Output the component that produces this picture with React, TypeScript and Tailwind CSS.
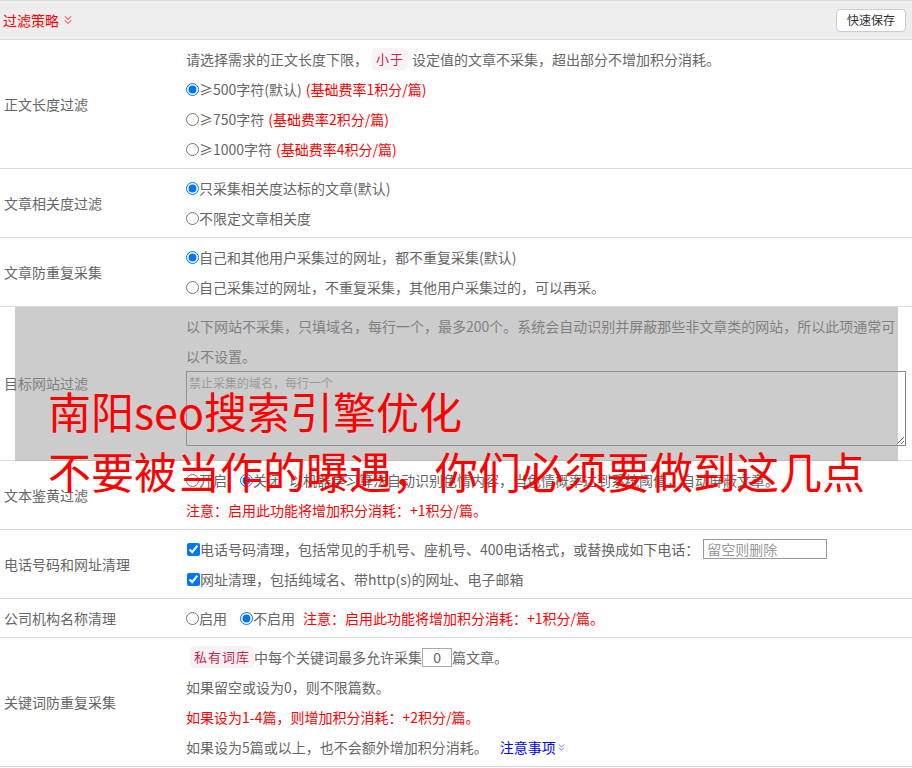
import { ChevronsDown } from 'lucide-react';
import type { ReactNode } from 'react';

type RowProps = {
  label: string;
  children: ReactNode;
};

function Row({ label, children }: RowProps) {
  return (
    <div className="flex border-b border-[#ddd]">
      <div className="w-[186px] shrink-0 flex items-center pl-1">{label}</div>
      <div className="flex-1 py-1 pr-2">{children}</div>
    </div>
  );
}

function Line({ children }: { children: ReactNode }) {
  return <div className="h-[30px] flex items-center whitespace-nowrap">{children}</div>;
}

function Radio({ checked, children, className = '' }: { checked?: boolean; children: ReactNode; className?: string }) {
  return (
    <label className={`inline-flex items-center ${className}`}>
      <input type="radio" defaultChecked={checked} className="m-0 w-[13px] h-[13px]" />
      <span>{children}</span>
    </label>
  );
}

function Check({ children }: { children: ReactNode }) {
  return (
    <label className="inline-flex items-center">
      <input type="checkbox" defaultChecked className="m-0 ml-px w-[13px] h-[13px]" />
      <span>{children}</span>
    </label>
  );
}

function Tag({ children }: { children: ReactNode }) {
  return (
    <span className="bg-[#f9f2f4] text-[#c7254e] text-[13px] rounded px-1 py-px mx-1 tracking-[1px]">
      {children}
    </span>
  );
}

const red = 'text-[#f00]';

export default function App() {
  return (
    <div className="relative w-[912px] h-[768px] overflow-hidden bg-white text-[14px] text-[#666] font-['Noto_Sans_CJK_SC',sans-serif]">
      {/* header */}
      <div className="h-[40px] border-y border-[#ddd] bg-[#eee] flex items-center justify-between pl-[3px] pr-[6px]">
        <div className={`flex items-center gap-0.5 ${red}`}>
          <span>过滤策略</span>
          <ChevronsDown size={14} strokeWidth={1.8} className="text-[#f55]" />
        </div>
        <button className="h-[23px] w-[70px] bg-white border border-[#ccc] rounded-[4px] text-[12px] text-[#333]">
          快速保存
        </button>
      </div>

      <Row label="正文长度过滤">
        <Line>
          请选择需求的正文长度下限，<Tag>小于</Tag>设定值的文章不采集，超出部分不增加积分消耗。
        </Line>
        <Line>
          <Radio checked>≥500字符(默认)</Radio>
          <span className={`ml-1 ${red}`}>(基础费率1积分/篇)</span>
        </Line>
        <Line>
          <Radio>≥750字符</Radio>
          <span className={`ml-1 ${red}`}>(基础费率2积分/篇)</span>
        </Line>
        <Line>
          <Radio>≥1000字符</Radio>
          <span className={`ml-1 ${red}`}>(基础费率4积分/篇)</span>
        </Line>
      </Row>

      <Row label="文章相关度过滤">
        <Line>
          <Radio checked>只采集相关度达标的文章(默认)</Radio>
        </Line>
        <Line>
          <Radio>不限定文章相关度</Radio>
        </Line>
      </Row>

      <Row label="文章防重复采集">
        <Line>
          <Radio checked>自己和其他用户采集过的网址，都不重复采集(默认)</Radio>
        </Line>
        <Line>
          <Radio>自己采集过的网址，不重复采集，其他用户采集过的，可以再采。</Radio>
        </Line>
      </Row>

      <Row label="目标网站过滤">
        <Line>以下网站不采集，只填域名，每行一个，最多200个。系统会自动识别并屏蔽那些非文章类的网站，所以此项通常可</Line>
        <Line>以不设置。</Line>
        <textarea
          placeholder="禁止采集的域名，每行一个"
          className="block w-[720px] h-[75px] mb-[10px] border border-[#888] px-[2px] py-[2px] text-[12px] placeholder:text-[#999]"
        />
      </Row>

      <Row label="文本鉴黄过滤">
        <Line>
          <Radio className="mr-[13px]">开启</Radio>
          <Radio checked className="mr-2">关闭</Radio>
          以机器学习算法自动识别色情内容，当色情概率达到系统阈值，自动屏蔽文章。
        </Line>
        <Line>
          <span className={red}>注意：启用此功能将增加积分消耗：+1积分/篇。</span>
        </Line>
      </Row>

      <Row label="电话号码和网址清理">
        <Line>
          <Check>电话号码清理，包括常见的手机号、座机号、400电话格式，或替换成如下电话：</Check>
          <input
            placeholder="留空则删除"
            className="ml-1 w-[124px] h-[20px] border border-[#999] px-[3px] text-[14px] placeholder:text-[#999]"
          />
        </Line>
        <Line>
          <Check>网址清理，包括纯域名、带http(s)的网址、电子邮箱</Check>
        </Line>
      </Row>

      <Row label="公司机构名称清理">
        <Line>
          <Radio className="mr-[13px]">启用</Radio>
          <Radio checked className="mr-2">不启用</Radio>
          <span className={red}>注意：启用此功能将增加积分消耗：+1积分/篇。</span>
        </Line>
      </Row>

      <Row label="关键词防重复采集">
        <Line>
          <Tag>私有词库</Tag>
          <span className="-ml-1">中每个关键词最多允许采集</span>
          <input
            defaultValue="0"
            className="w-[30px] h-[19px] border border-[#aaa] text-center text-[14px] text-[#666]"
          />
          篇文章。
        </Line>
        <Line>如果留空或设为0，则不限篇数。</Line>
        <Line>
          <span className={red}>如果设为1-4篇，则增加积分消耗：+2积分/篇。</span>
        </Line>
        <Line>
          如果设为5篇或以上，也不会额外增加积分消耗。
          <span className="ml-3 inline-flex items-center text-[#00f]">
            注意事项
            <ChevronsDown size={11} strokeWidth={2} className="text-[#66f]" />
          </span>
        </Line>
      </Row>

      {/* watermark overlay */}
      <div className="absolute left-[15px] top-[307px] w-[883px] h-[154px] bg-[#999]/50" />
      <div className="absolute left-[48px] top-[380px] text-[43px] leading-[60px] text-[#f00] whitespace-nowrap">
        <div>南阳seo搜索引擎优化</div>
        <div>不要被当作的曝遇，你们必须要做到这几点</div>
      </div>
    </div>
  );
}
